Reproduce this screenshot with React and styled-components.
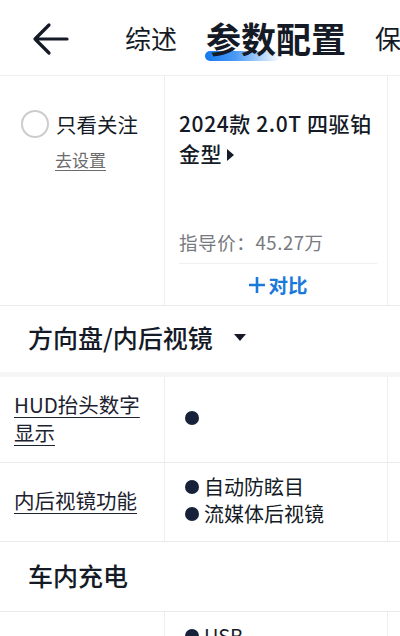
import styled, { createGlobalStyle } from "styled-components";

const GlobalStyle = createGlobalStyle`
  html, body {
    margin: 0;
    padding: 0;
    background: #ffffff;
  }
  body {
    width: 400px;
    height: 636px;
    overflow: hidden;
    font-family: "Noto Sans CJK SC", "Noto Sans", sans-serif;
    color: #141a26;
  }
  *, *::before, *::after {
    box-sizing: border-box;
  }
`;

const COLS = "165px 223px 1fr";

const StyledPage = styled.div`
  width: 400px;
`;

const StyledHeader = styled.header`
  display: flex;
  align-items: center;
  height: 76px;
  border-bottom: 1px solid #eeeeee;
  overflow: hidden;
  white-space: nowrap;
`;

const StyledBackBtn = styled.button`
  display: flex;
  align-items: center;
  border: 0;
  background: none;
  padding: 0 0 0 31px;
  margin-top: 2px;
  width: 100px;
  flex-shrink: 0;
`;

const StyledTabs = styled.nav`
  display: flex;
  align-items: center;
  gap: 29px;
  margin-left: 25px;
`;

const StyledTab = styled.span`
  position: relative;
  font-size: ${(props) => (props.active ? "35px" : "26px")};
  font-weight: ${(props) => (props.active ? 700 : 400)};
  line-height: 40px;
  color: #141a26;
  z-index: 0;

  &::after {
    content: "";
    display: ${(props) => (props.active ? "block" : "none")};
    position: absolute;
    left: -1px;
    top: 33px;
    width: 76px;
    height: 10px;
    border-radius: 5px;
    background: linear-gradient(90deg, #1677f0 0%, #4a9af5 40%, rgba(255, 255, 255, 0) 100%);
    z-index: -1;
  }
`;

const StyledCarRow = styled.section`
  display: grid;
  grid-template-columns: ${COLS};
  height: 230px;
  border-bottom: 1px solid #eaeaea;
`;

const StyledFollowCell = styled.div`
  display: flex;
  flex-direction: column;
  padding: 33px 0 0 21px;
  border-right: 1px solid #eeeeee;
`;

const StyledFollowLine = styled.label`
  display: flex;
  align-items: center;
  gap: 7px;
  font-size: 20.5px;
  line-height: 30px;
`;

const StyledRadio = styled.span`
  width: 28px;
  height: 28px;
  border: 2px solid #cccccc;
  border-radius: 50%;
`;

const StyledSetLink = styled.a`
  margin: 9px 0 0 34px;
  font-size: 17px;
  line-height: 24px;
  color: #6b6b6b;
  text-decoration: underline;
  text-underline-offset: 3px;
`;

const StyledCarCell = styled.div`
  display: flex;
  flex-direction: column;
  padding: 32px 10px 0 14px;
  border-right: 1px solid #eeeeee;
`;

const StyledCarTitle = styled.h2`
  margin: 0;
  font-size: 21px;
  font-weight: 500;
  line-height: 30px;
  letter-spacing: 0.6px;
`;

const StyledCaret = styled.span`
  display: inline-block;
  width: 0;
  height: 0;
  margin-left: 5px;
  vertical-align: 1px;
  border-top: 6px solid transparent;
  border-bottom: 6px solid transparent;
  border-left: 7px solid #141a26;
`;

const StyledPrice = styled.p`
  margin: auto 0 0;
  padding-bottom: 8px;
  border-bottom: 1px solid #f0f0f0;
  font-size: 18.5px;
  line-height: 26px;
  letter-spacing: 0.6px;
  color: #777a80;
`;

const StyledCompareBtn = styled.button`
  height: 41px;
  border: 0;
  background: none;
  font-family: inherit;
  font-size: 19.5px;
  font-weight: 700;
  color: #1a7ad9;
  display: flex;
  align-items: center;
  justify-content: center;
  gap: 2px;
`;

const StyledSection = styled.h3`
  display: flex;
  align-items: center;
  margin: 0;
  height: ${(props) => props.height}px;
  padding: 0 0 4px 28px;
  font-size: 25px;
  font-weight: 500;
  border-bottom: ${(props) => (props.shadow ? "5px solid #f6f6f6" : "1px solid #eaeaea")};
`;

const StyledTriangle = styled.span`
  width: 0;
  height: 0;
  margin-left: 21px;
  border-left: 6px solid transparent;
  border-right: 6px solid transparent;
  border-top: 7px solid #141a26;
`;

const StyledParamRow = styled.div`
  display: grid;
  grid-template-columns: ${COLS};
  height: ${(props) => props.height}px;
  border-bottom: 1px solid #eaeaea;
`;

const StyledParamName = styled.div`
  display: flex;
  align-items: center;
  padding: 0 12px 4px 14px;
  border-right: 1px solid #eeeeee;
  font-size: 20.5px;
  line-height: 28px;
  text-decoration: underline;
  text-underline-offset: 4px;
  text-decoration-thickness: 1px;
  color: #1d2230;
`;

const StyledParamValue = styled.div`
  display: flex;
  flex-direction: column;
  justify-content: ${(props) => (props.top ? "flex-start" : "center")};
  padding: ${(props) => (props.top ? "10px 0 0 20px" : "0 0 4px 20px")};
  border-right: 1px solid #eeeeee;
  font-size: 20px;
  line-height: 27px;
`;

const StyledBullet = styled.div`
  display: flex;
  align-items: center;
  gap: 5px;
`;

const StyledDot = styled.span`
  width: 14px;
  height: 14px;
  border-radius: 50%;
  background: #17213a;
  flex-shrink: 0;
`;

const BulletList = ({ items }) =>
  items.map((item, i) => (
    <StyledBullet key={i}>
      <StyledDot />
      {item && <span>{item}</span>}
    </StyledBullet>
  ));

const App = () => {
  return (
    <StyledPage>
      <GlobalStyle />
      <StyledHeader>
        <StyledBackBtn aria-label="返回">
          <svg width="38" height="34" viewBox="0 0 38 34" fill="none">
            <path d="M36 17H4M18 3L4 17l14 14" stroke="#141a26" strokeWidth="3.2" strokeLinecap="round" strokeLinejoin="round" />
          </svg>
        </StyledBackBtn>
        <StyledTabs>
          <StyledTab>综述</StyledTab>
          <StyledTab active>参数配置</StyledTab>
          <StyledTab>保值率</StyledTab>
        </StyledTabs>
      </StyledHeader>

      <StyledCarRow>
        <StyledFollowCell>
          <StyledFollowLine>
            <StyledRadio />
            只看关注
          </StyledFollowLine>
          <StyledSetLink>去设置</StyledSetLink>
        </StyledFollowCell>
        <StyledCarCell>
          <StyledCarTitle>
            2024款 2.0T 四驱铂金型
            <StyledCaret />
          </StyledCarTitle>
          <StyledPrice>指导价：45.27万</StyledPrice>
          <StyledCompareBtn>
            <svg width="18" height="18" viewBox="0 0 18 18">
              <path d="M9 1v16M1 9h16" stroke="#1a7ad9" strokeWidth="2.6" />
            </svg>
            对比
          </StyledCompareBtn>
        </StyledCarCell>
        <div />
      </StyledCarRow>

      <StyledSection height={71} shadow>
        方向盘/内后视镜
        <StyledTriangle />
      </StyledSection>

      <StyledParamRow height={86}>
        <StyledParamName>HUD抬头数字显示</StyledParamName>
        <StyledParamValue>
          <BulletList items={[""]} />
        </StyledParamValue>
        <div />
      </StyledParamRow>

      <StyledParamRow height={79}>
        <StyledParamName>内后视镜功能</StyledParamName>
        <StyledParamValue>
          <BulletList items={["自动防眩目", "流媒体后视镜"]} />
        </StyledParamValue>
        <div />
      </StyledParamRow>

      <StyledSection height={70}>车内充电</StyledSection>

      <StyledParamRow height={140}>
        <StyledParamName>多媒体/充电接口</StyledParamName>
        <StyledParamValue top>
          <BulletList items={["USB", "Type-C"]} />
        </StyledParamValue>
        <div />
      </StyledParamRow>
    </StyledPage>
  );
};

export default App;
